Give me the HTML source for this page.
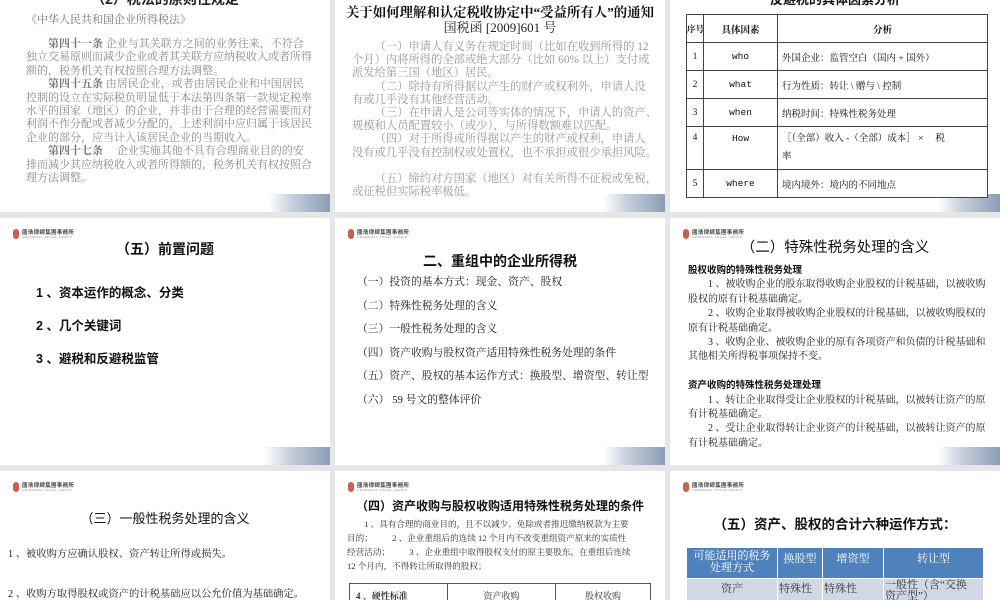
<!DOCTYPE html>
<html><head><meta charset="utf-8"><style>
body{margin:0;width:1000px;height:600px;background:#e6e6e6;overflow:hidden;position:relative;font-family:"Liberation Serif","Noto Serif CJK SC",serif;}
.s{position:absolute;background:#fff;overflow:hidden;width:330px;}
.bar{position:absolute;right:0;width:62px;height:18px;background:linear-gradient(90deg,#fff,#c5cedb 40%,#8d9db5);}
.a{position:absolute;white-space:nowrap;}
.t{font-family:"Liberation Sans","Noto Sans CJK SC",sans-serif;font-weight:bold;color:#111;}
.logo{position:absolute;left:13px;top:11px;width:80px;height:12px;}
.logo i{position:absolute;left:0;top:0;width:6px;height:10px;border-radius:3px;background:#c8604f;}
.logo b{position:absolute;left:9px;top:-1px;font:bold 5.5px "Noto Sans CJK SC",sans-serif;color:#444;letter-spacing:.3px;}
.logo u{position:absolute;left:9px;top:6px;font:3.5px "Liberation Serif",serif;color:#888;text-decoration:none;letter-spacing:.3px;}
table{border-collapse:collapse;position:absolute;}
.tb td{border:1px solid #444;padding:0;}
</style></head><body>

<!-- row1 col1 -->
<div class="s" style="left:0;top:0;height:212px;">
<div class="a t" style="left:0;width:330px;text-align:center;top:-11px;font-size:14px;color:#222;">（2）税法的原则性规定</div>
<div class="a" style="left:26px;top:11px;font-size:11px;color:#777;">《中华人民共和国企业所得税法》</div>
<div class="a" style="left:26px;top:38px;font-size:11px;line-height:13.4px;color:#8a8a8a;">
&emsp;&emsp;<b style="color:#777">第四十一条</b> 企业与其关联方之间的业务往来，不符合<br>独立交易原则而减少企业或者其关联方应纳税收入或者所得<br>额的，税务机关有权按照合理方法调整。<br>&emsp;&emsp;<b style="color:#777">第四十五条</b> 由居民企业，或者由居民企业和中国居民<br>控制的设立在实际税负明显低于本法第四条第一款规定税率<br>水平的国家（地区）的企业，并非由于合理的经营需要而对<br>利润不作分配或者减少分配的，上述利润中应归属于该居民<br>企业的部分，应当计入该居民企业的当期收入。<br>&emsp;&emsp;<b style="color:#777">第四十七条</b>&emsp; 企业实施其他不具有合理商业目的的安<br>排而减少其应纳税收入或者所得额的，税务机关有权按照合<br>理方法调整。</div>
<div class="bar" style="bottom:0;"></div>
</div>

<!-- row1 col2 -->
<div class="s" style="left:335px;top:0;height:212px;">
<div class="a t" style="left:0;width:330px;text-align:center;top:2px;font-size:13.4px;font-family:'Liberation Serif','Noto Serif CJK SC',serif;">关于如何理解和认定税收协定中“受益所有人”的通知</div>
<div class="a" style="left:0;width:330px;text-align:center;top:17px;font-size:13px;color:#222;">国税函 [2009]601 号</div>
<div class="a" style="left:17px;top:41px;font-size:11.3px;line-height:13.2px;color:#999;">&emsp;&emsp;（一）申请人有义务在规定时间（比如在收到所得的 12<br>个月）内将所得的全部或绝大部分（比如 60% 以上）支付或<br>派发给第三国（地区）居民。<br>&emsp;&emsp;（二）除持有所得据以产生的财产或权利外，申请人没<br>有或几乎没有其他经营活动。<br>&emsp;&emsp;（三）在申请人是公司等实体的情况下，申请人的资产、<br>规模和人员配置较小（或少），与所得数额难以匹配。<br>&emsp;&emsp;（四）对于所得或所得据以产生的财产或权利，申请人<br>没有或几乎没有控制权或处置权，也不承担或很少承担风险。<br><br>&emsp;&emsp;（五）缔约对方国家（地区）对有关所得不征税或免税，<br>或征税但实际税率极低。</div>
<div class="bar" style="bottom:0;"></div>
</div>

<!-- row1 col3 -->
<div class="s" style="left:670px;top:0;height:212px;">
<div class="a t" style="left:0;width:330px;text-align:center;top:-11px;font-size:13px;">反避税的具体因素分析</div>
<div class="bar" style="bottom:0;"></div>
<table class="tb" style="left:16px;top:14px;width:302px;font-size:9.5px;color:#111;table-layout:fixed;background:#fff;z-index:1;">
<col style="width:17px"><col style="width:74px"><col>
<tr style="height:28px"><td style="text-align:center;font-weight:bold;font-size:8.5px;white-space:nowrap">序号</td><td style="text-align:center;font-weight:bold">具体因素</td><td style="text-align:center;font-weight:bold">分析</td></tr>
<tr style="height:28px"><td style="text-align:center">1</td><td style="text-align:center;font-family:'Liberation Mono',monospace">who</td><td style="padding-left:4px">外国企业：监管空白（国内 + 国外）</td></tr>
<tr style="height:28px"><td style="text-align:center">2</td><td style="text-align:center;font-family:'Liberation Mono',monospace">what</td><td style="padding-left:4px">行为性质：转让 \ 赠与 \ 控制</td></tr>
<tr style="height:28px"><td style="text-align:center">3</td><td style="text-align:center;font-family:'Liberation Mono',monospace">when</td><td style="padding-left:4px">纳税时间：特殊性税务处理</td></tr>
<tr style="height:43px"><td style="text-align:center;vertical-align:top;padding-top:6px">4</td><td style="text-align:center;vertical-align:top;padding-top:6px;font-family:'Liberation Mono',monospace">How</td><td style="padding-left:4px;line-height:18px">［（全部）收入 -（全部）成本］ ×&emsp; 税<br>率</td></tr>
<tr style="height:28px"><td style="text-align:center">5</td><td style="text-align:center;font-family:'Liberation Mono',monospace">where</td><td style="padding-left:4px">境内境外：境内的不同地点</td></tr>
</table>
</div>

<!-- row2 col1 -->
<div class="s" style="left:0;top:218px;height:247px;">
<div class="logo"><i></i><b>國浩律師集團事務所</b><u>GRANDALL LEGAL GROUP</u></div>
<div class="a t" style="left:0;width:330px;text-align:center;top:21px;font-size:14px;">（五）前置问题</div>
<div class="a t" style="left:36px;top:64px;font-size:12.5px;">1 、资本运作的概念、分类</div>
<div class="a t" style="left:36px;top:97px;font-size:12.5px;">2 、几个关键词</div>
<div class="a t" style="left:36px;top:130px;font-size:12.5px;">3 、避税和反避税监管</div>
<div class="bar" style="bottom:0;width:66px;"></div>
</div>

<!-- row2 col2 -->
<div class="s" style="left:335px;top:218px;height:247px;">
<div class="logo"><i></i><b>國浩律師集團事務所</b><u>GRANDALL LEGAL GROUP</u></div>
<div class="a t" style="left:0;width:330px;text-align:center;top:33px;font-size:14px;">二、重组中的企业所得税</div>
<div class="a" style="left:22px;top:53px;font-size:10.8px;line-height:23.6px;color:#222;">（一）投资的基本方式：现金、资产、股权<br>（二）特殊性税务处理的含义<br>（三）一般性税务处理的含义<br>（四）资产收购与股权资产适用特殊性税务处理的条件<br>（五）资产、股权的基本运作方式：换股型、增资型、转让型<br>（六） 59 号文的整体评价</div>
<div class="bar" style="bottom:0;"></div>
</div>

<!-- row2 col3 -->
<div class="s" style="left:670px;top:218px;height:247px;">
<div class="logo"><i></i><b>國浩律師集團事務所</b><u>GRANDALL LEGAL GROUP</u></div>
<div class="a t" style="left:0;width:330px;text-align:center;top:18px;font-size:14.5px;font-weight:normal;">（二）特殊性税务处理的含义</div>
<div class="a" style="left:18px;top:46px;font-size:10px;line-height:14.4px;color:#222;"><b class="t" style="font-size:9.5px">股权收购的特殊性税务处理</b><br>&emsp;&emsp;1 、被收购企业的股东取得收购企业股权的计税基础，以被收购<br>股权的原有计税基础确定。<br>&emsp;&emsp;2 、收购企业取得被收购企业股权的计税基础，以被收购股权的<br>原有计税基础确定。<br>&emsp;&emsp;3 、收购企业、被收购企业的原有各项资产和负债的计税基础和<br>其他相关所得税事项保持不变。<br><br><b class="t" style="font-size:9.5px">资产收购的特殊性税务处理处理</b><br>&emsp;&emsp;1 、转让企业取得受让企业股权的计税基础，以被转让资产的原<br>有计税基础确定。<br>&emsp;&emsp;2 、受让企业取得转让企业资产的计税基础，以被转让资产的原<br>有计税基础确定。</div>
<div class="bar" style="bottom:0;"></div>
</div>

<!-- row3 col1 -->
<div class="s" style="left:0;top:471px;height:129px;">
<div class="logo"><i></i><b>國浩律師集團事務所</b><u>GRANDALL LEGAL GROUP</u></div>
<div class="a t" style="left:0;width:330px;text-align:center;top:37px;font-size:13px;font-weight:normal;">（三）一般性税务处理的含义</div>
<div class="a" style="left:8px;top:74px;font-size:10.3px;color:#222;">1 、被收购方应确认股权、资产转让所得或损失。</div>
<div class="a" style="left:8px;top:114px;font-size:10.3px;color:#222;">2 、收购方取得股权或资产的计税基础应以公允价值为基础确定。</div>
</div>

<!-- row3 col2 -->
<div class="s" style="left:335px;top:471px;height:129px;">
<div class="logo"><i></i><b>國浩律師集團事務所</b><u>GRANDALL LEGAL GROUP</u></div>
<div class="a t" style="left:0;width:330px;text-align:center;top:26px;font-size:12px;">（四）资产收购与股权收购适用特殊性税务处理的条件</div>
<div class="a" style="left:12px;top:46px;font-size:8.6px;line-height:14px;color:#333;">&emsp;&emsp;1 、具有合理的商业目的，且不以减少、免除或者推迟缴纳税款为主要<br>目的；&emsp;&emsp; 2 、企业重组后的连续 12 个月内不改变重组资产原来的实质性<br>经营活动；&emsp;&emsp; 3 、企业重组中取得股权支付的原主要股东，在重组后连续<br>12 个月内，不得转让所取得的股权；</div>
<table style="left:14px;top:112px;width:302px;font-size:9px;color:#333;">
<tr style="height:24px"><td style="width:90px;border:1px solid #555;font-weight:bold;padding-left:6px">4 、硬性标准</td><td style="width:105px;border:1px solid #555;text-align:center">资产收购</td><td style="border:1px solid #555;text-align:center">股权收购</td></tr>
</table>
</div>

<!-- row3 col3 -->
<div class="s" style="left:670px;top:471px;height:129px;">
<div class="logo"><i></i><b>國浩律師集團事務所</b><u>GRANDALL LEGAL GROUP</u></div>
<div class="a t" style="left:0;width:330px;text-align:center;top:42px;font-size:13.5px;">（五）资产、股权的合计六种运作方式：</div>
<table style="left:17px;top:77px;width:296px;font-size:11px;" cellspacing="0">
<tr style="height:30px;background:#4f81bd;color:#fff;"><td style="width:88px;text-align:center;line-height:12px;border-right:1px solid #fff;vertical-align:top;padding-top:2px">可能适用的税务<br>处理方式</td><td style="width:42px;text-align:center;border-right:1px solid #fff;vertical-align:top;padding-top:2px">换股型</td><td style="width:58px;text-align:center;border-right:1px solid #fff;vertical-align:top;padding-top:2px">增资型</td><td style="text-align:center;vertical-align:top;padding-top:2px">转让型</td></tr>
<tr style="height:24px;background:#d0d8e8;color:#333;"><td style="text-align:center;vertical-align:top;border-right:1px solid #fff;border-top:1px solid #fff">资产</td><td style="vertical-align:top;border-right:1px solid #fff;border-top:1px solid #fff">特殊性</td><td style="vertical-align:top;border-right:1px solid #fff;border-top:1px solid #fff">特殊性</td><td style="vertical-align:top;line-height:11px;border-top:1px solid #fff">一般性（含“交换<br>资产型”）</td></tr>
</table>
</div>

</body></html>
